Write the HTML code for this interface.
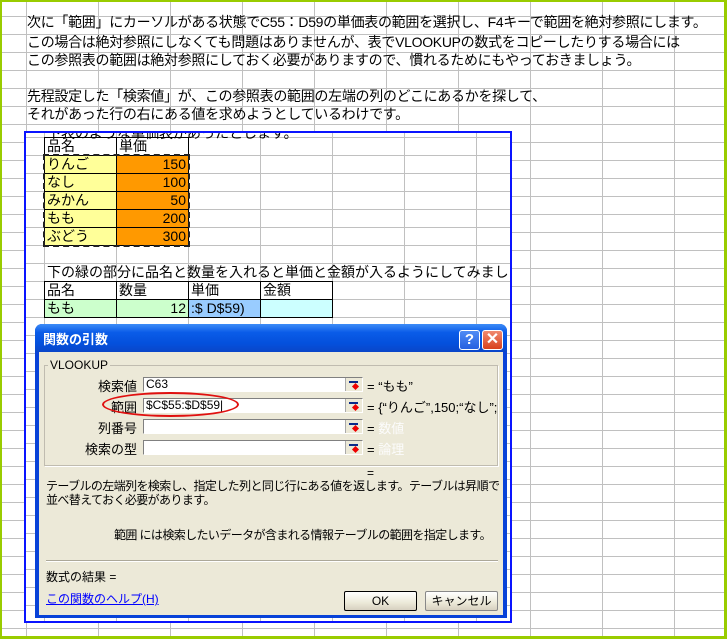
<!DOCTYPE html>
<html><head><meta charset="utf-8"><style>
*{margin:0;padding:0;box-sizing:border-box}
body{width:727px;height:639px;overflow:hidden;background:#fff;position:relative;font-family:"Liberation Sans","Noto Sans CJK JP",sans-serif;color:#000}
.a{position:absolute;white-space:nowrap}
#outer{position:absolute;left:0;top:0;width:727px;height:639px;
background-image:linear-gradient(to right,#c0c0c0 1px,transparent 1px),linear-gradient(to bottom,#c0c0c0 1px,transparent 1px);
background-size:72px 18px;background-position:24px 14px;border:2px solid #99cc00;border-width:2px 3px 3px 2px}
.t{font-size:14px;line-height:18px;left:27px;letter-spacing:-0.3px}
#box{position:absolute;left:24px;top:131px;width:488px;height:492px;border:2px solid #0a14ff;overflow:hidden;
background-color:#fff;background-image:linear-gradient(to right,#c0c0c0 1px,transparent 1px),linear-gradient(to bottom,#c0c0c0 1px,transparent 1px);
background-size:72px 18px;background-position:18px 4px}
.c{position:absolute;border:1px solid #000;font-size:14px;line-height:17px;padding:0 2px;overflow:hidden;white-space:nowrap}
.r{text-align:right}
#dlg{position:absolute;left:35px;top:324px;width:472px;height:294px;background:#0842d8;border-radius:7px 7px 0 0}
#tb{position:absolute;left:0;top:0;width:472px;height:28px;border-radius:7px 7px 0 0;background:linear-gradient(#3d8cf7,#0a5ce8 30%,#0450dc 70%,#0a46c8)}
#body{position:absolute;left:4px;top:28px;width:464px;height:263px;background:#ece9d8;font-size:12px}
.lb{position:absolute;font-size:13px;text-align:right;width:80px}
.in{position:absolute;left:104px;width:220px;height:15px;background:#fff;border:1px solid #7f9db9;border-color:#808080 #fff #fff #808080;font-size:12px;line-height:13px;padding-left:2px}
.ic{position:absolute;right:0;top:0;width:17px;height:13px;background:#ece9d8;border-left:1px solid #aaa}
.ic:before{content:"";position:absolute;left:3px;top:3px;width:9px;height:2px;background:#0a2a8a}
.ic:after{content:"";position:absolute;left:7px;top:6px;width:5px;height:5px;background:#e00;transform:rotate(45deg)}
.eq{position:absolute;left:328px;font-size:13px}
.btn{position:absolute;height:20px;border:1px solid #555;background:linear-gradient(#fff,#ece9d8 60%,#d6d0c0);font-size:12px;text-align:center;line-height:18px;border-radius:2px}
</style></head><body>
<div id="outer"></div>
<div class="a t" style="top:13px">次に「範囲」にカーソルがある状態でC55：D59の単価表の範囲を選択し、F4キーで範囲を絶対参照にします。</div>
<div class="a t" style="top:33px">この場合は絶対参照にしなくても問題はありませんが、表でVLOOKUPの数式をコピーしたりする場合には</div>
<div class="a t" style="top:51px">この参照表の範囲は絶対参照にしておく必要がありますので、慣れるためにもやっておきましょう。</div>
<div class="a t" style="top:87px">先程設定した「検索値」が、この参照表の範囲の左端の列のどこにあるかを探して、</div>
<div class="a t" style="top:105px">それがあった行の右にある値を求めようとしているわけです。</div>

<div id="box">
 <div class="a" style="left:21px;top:-10px;font-size:14px">下表のような単価表があったとします。</div>
 <div class="c" style="left:18px;top:4px;width:73px;height:19px">品名</div>
 <div class="c" style="left:90px;top:4px;width:73px;height:19px">単価</div>
 <div class="c" style="left:18px;top:22px;width:73px;height:19px;background:#ffff99">りんご</div>
 <div class="c r" style="left:90px;top:22px;width:73px;height:19px;background:#ff9900">150</div>
 <div class="c" style="left:18px;top:40px;width:73px;height:19px;background:#ffff99">なし</div>
 <div class="c r" style="left:90px;top:40px;width:73px;height:19px;background:#ff9900">100</div>
 <div class="c" style="left:18px;top:58px;width:73px;height:19px;background:#ffff99">みかん</div>
 <div class="c r" style="left:90px;top:58px;width:73px;height:19px;background:#ff9900">50</div>
 <div class="c" style="left:18px;top:76px;width:73px;height:19px;background:#ffff99">もも</div>
 <div class="c r" style="left:90px;top:76px;width:73px;height:19px;background:#ff9900">200</div>
 <div class="c" style="left:18px;top:94px;width:73px;height:19px;background:#ffff99">ぶどう</div>
 <div class="c r" style="left:90px;top:94px;width:73px;height:19px;background:#ff9900">300</div>
 <div class="a" style="left:17px;top:21px;width:147px;height:93px;border:2px dashed #222"></div>
 <div class="a" style="left:21px;top:130px;font-size:14px;line-height:18px">下の緑の部分に品名と数量を入れると単価と金額が入るようにしてみましょう</div>
 <div class="c" style="left:18px;top:148px;width:73px;height:19px">品名</div>
 <div class="c" style="left:90px;top:148px;width:73px;height:19px">数量</div>
 <div class="c" style="left:162px;top:148px;width:73px;height:19px">単価</div>
 <div class="c" style="left:234px;top:148px;width:73px;height:19px">金額</div>
 <div class="c" style="left:18px;top:166px;width:73px;height:19px;background:#ccffcc">もも</div>
 <div class="c r" style="left:90px;top:166px;width:73px;height:19px;background:#ccffcc">12</div>
 <div class="c" style="left:162px;top:166px;width:73px;height:19px;background:#99ccff">:$ D$59)</div>
 <div class="c" style="left:234px;top:166px;width:73px;height:19px;background:#ccffff"></div>
</div>

<div id="dlg">
 <div id="tb">
  <div class="a" style="left:8px;top:5px;color:#fff;font-weight:bold;font-size:13px">関数の引数</div>
  <div class="a" style="left:424px;top:6px;width:21px;height:20px;border:1px solid #fff;border-radius:3px;background:linear-gradient(#4f8bf5,#2660e0);color:#fff;font-weight:bold;font-size:15px;text-align:center;line-height:18px">?</div>
  <div class="a" style="left:447px;top:6px;width:21px;height:20px;border:1px solid #fff;border-radius:3px;background:linear-gradient(#f08a70,#d8401c);color:#fff;font-weight:bold;font-size:16px;text-align:center;line-height:18px">✕</div>
 </div>
 <div id="body">
  <div class="a" style="left:5px;top:13px;width:454px;height:101px;border:1px solid #c0bcb0;box-shadow:1px 1px 0 #fff"></div>
  <div class="a" style="left:9px;top:6px;background:#ece9d8;padding:0 2px;font-size:12px">VLOOKUP</div>
  <div class="lb" style="left:18px;top:24px">検索値</div>
  <div class="in" style="top:25px">C63<div class="ic"></div></div>
  <div class="eq" style="top:24px">= “もも”</div>
  <div class="lb" style="left:18px;top:45px">範囲</div>
  <div class="in" style="top:46px">$C$55:$D$59|<div class="ic"></div></div>
  <div class="eq" style="top:45px">= {“りんご”,150;“なし”;</div>
  <div class="lb" style="left:18px;top:66px">列番号</div>
  <div class="in" style="top:67px"><div class="ic"></div></div>
  <div class="eq" style="top:66px">= <span style="color:#fcfcfc">数値</span></div>
  <div class="lb" style="left:18px;top:87px">検索の型</div>
  <div class="in" style="top:88px"><div class="ic"></div></div>
  <div class="eq" style="top:87px">= <span style="color:#fcfcfc">論理</span></div>
  <div class="a" style="left:63px;top:40px;width:137px;height:25px;border:2px solid #e01010;border-radius:50%"></div>
  <div class="a" style="left:328px;top:114px">=</div>
  <div class="a" style="left:7px;top:127px;line-height:14px;white-space:normal;width:454px;letter-spacing:-0.6px">テーブルの左端列を検索し、指定した列と同じ行にある値を返します。テーブルは昇順で並べ替えておく必要があります。</div>
  <div class="a" style="left:75px;top:174px;letter-spacing:-0.6px">範囲 には検索したいデータが含まれる情報テーブルの範囲を指定します。</div>
  <div class="a" style="left:7px;top:208px;width:452px;height:2px;border-top:1px solid #aca899;border-bottom:1px solid #fff"></div>
  <div class="a" style="left:7px;top:216px">数式の結果 =</div>
  <div class="a" style="left:7px;top:238px;color:#0000ff;text-decoration:underline">この関数のヘルプ(H)</div>
  <div class="btn" style="left:305px;top:239px;width:73px;border-color:#000">OK</div>
  <div class="btn" style="left:386px;top:239px;width:73px;border-color:#888">キャンセル</div>
 </div>
</div>
</body></html>
